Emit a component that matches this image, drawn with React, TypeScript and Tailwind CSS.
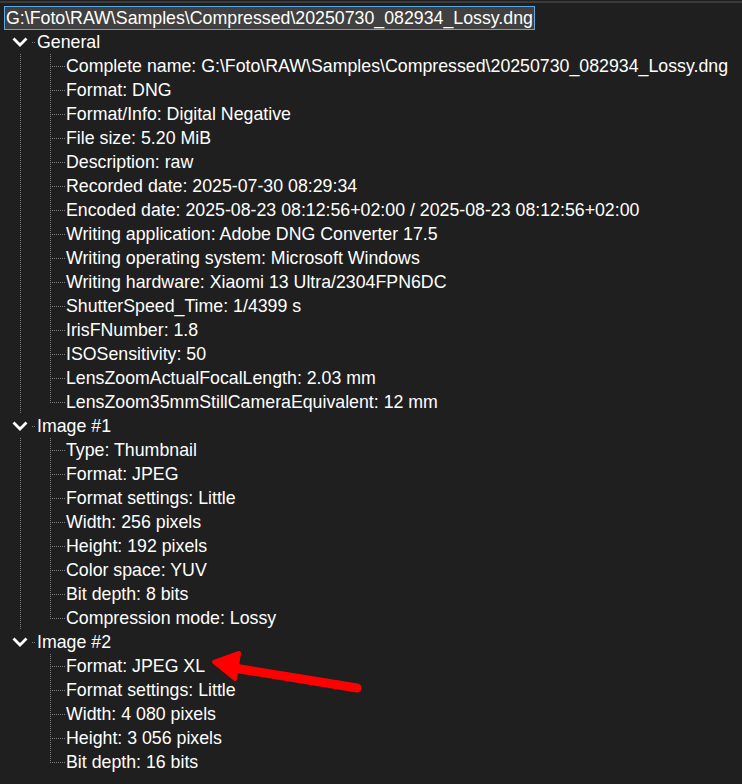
import React from "react";

type Group = { title: string; items: string[] };

const root = "G:\\Foto\\RAW\\Samples\\Compressed\\20250730_082934_Lossy.dng";

const groups: Group[] = [
    {
        title: "General",
        items: [
            "Complete name: " + root,
            "Format: DNG",
            "Format/Info: Digital Negative",
            "File size: 5.20 MiB",
            "Description: raw",
            "Recorded date: 2025-07-30 08:29:34",
            "Encoded date: 2025-08-23 08:12:56+02:00 / 2025-08-23 08:12:56+02:00",
            "Writing application: Adobe DNG Converter 17.5",
            "Writing operating system: Microsoft Windows",
            "Writing hardware: Xiaomi 13 Ultra/2304FPN6DC",
            "ShutterSpeed_Time: 1/4399 s",
            "IrisFNumber: 1.8",
            "ISOSensitivity: 50",
            "LensZoomActualFocalLength: 2.03 mm",
            "LensZoom35mmStillCameraEquivalent: 12 mm",
        ],
    },
    {
        title: "Image #1",
        items: [
            "Type: Thumbnail",
            "Format: JPEG",
            "Format settings: Little",
            "Width: 256 pixels",
            "Height: 192 pixels",
            "Color space: YUV",
            "Bit depth: 8 bits",
            "Compression mode: Lossy",
        ],
    },
    {
        title: "Image #2",
        items: [
            "Format: JPEG XL",
            "Format settings: Little",
            "Width: 4 080 pixels",
            "Height: 3 056 pixels",
            "Bit depth: 16 bits",
        ],
    },
];

const DOT = "#7d7d7d";

function GroupRow({ title }: { title: string }) {
    return (
        <div className="flex h-6 items-center">
            <svg width="37" height="24" className="shrink-0" shapeRendering="crispEdges">
                <polyline
                    points="13.5,8.5 20,15 26.5,8.5"
                    fill="none"
                    stroke="#fff"
                    strokeWidth="2.8"
                    shapeRendering="geometricPrecision"
                />
                <line x1="32" y1="12.5" x2="36" y2="12.5" stroke={DOT} strokeDasharray="1 1" />
            </svg>
            <span>{title}</span>
        </div>
    );
}

function ItemRow({ text, parentLast, last }: { text: string; parentLast: boolean; last: boolean }) {
    return (
        <div className="flex h-6 items-center">
            <svg width="66" height="24" className="shrink-0" shapeRendering="crispEdges">
                {!parentLast && (
                    <line x1="20.5" y1="0" x2="20.5" y2="24" stroke={DOT} strokeDasharray="1 1" />
                )}
                <line x1="50.5" y1="0" x2="50.5" y2={last ? 13 : 24} stroke={DOT} strokeDasharray="1 1" />
                <line x1="50" y1="12.5" x2="65" y2="12.5" stroke={DOT} strokeDasharray="1 1" />
            </svg>
            <span className="whitespace-nowrap">{text}</span>
        </div>
    );
}

export default function App() {
    return (
        <div
            className="relative h-[784px] w-[742px] overflow-hidden bg-[#1f1f1f] text-[17.75px] text-white"
            style={{ fontFamily: '"Liberation Sans", Arial, sans-serif' }}
        >
            <div className="mt-px h-[2px] bg-[#3a3a3a]" />

            <div className="pt-[3px]">
                <div className="flex h-6 items-center pl-[4px]">
                    <span className="border border-[#5aa7e6] bg-[#404040] px-[1px] leading-[22px]">{root}</span>
                </div>

                {groups.map((g, gi) => (
                    <div key={g.title}>
                        <GroupRow title={g.title} />
                        {g.items.map((t, i) => (
                            <ItemRow
                                key={t}
                                text={t}
                                parentLast={gi === groups.length - 1}
                                last={i === g.items.length - 1}
                            />
                        ))}
                    </div>
                ))}
            </div>

            {/* annotation arrow */}
            <svg className="pointer-events-none absolute left-[200px] top-[640px]" width="170" height="60">
                <polygon
                    points="14,22 39,13 35,39"
                    fill="#ff0000"
                    stroke="#ff0000"
                    strokeWidth="4"
                    strokeLinejoin="round"
                />
                <line x1="34" y1="28" x2="157" y2="48" stroke="#ff0000" strokeWidth="9" strokeLinecap="round" />
            </svg>
        </div>
    );
}
